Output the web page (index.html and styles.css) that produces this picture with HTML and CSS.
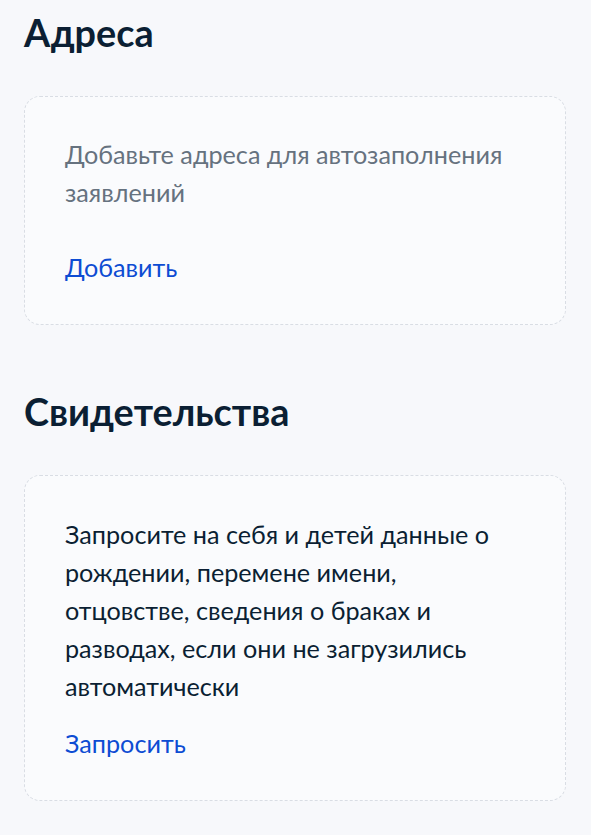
FILE: index.html
```html
<!DOCTYPE html>
<html lang="ru">
<head>
<meta charset="utf-8">
<link rel="stylesheet" href="styles.css">
</head>
<body>
<main class="page">
  <section class="section">
    <h2 class="section-title">Адреса</h2>
    <div class="card card--empty">
      <p class="card-text card-text--muted">Добавьте адреса для автозаполнения заявлений</p>
      <a class="card-link" href="#">Добавить</a>
    </div>
  </section>
  <section class="section">
    <h2 class="section-title">Свидетельства</h2>
    <div class="card">
      <p class="card-text">Запросите на себя и детей данные о рождении, перемене имени, отцовстве, сведения о браках и разводах, если они не загрузились автоматически</p>
      <a class="card-link" href="#">Запросить</a>
    </div>
  </section>
</main>
</body>
</html>
```
FILE: styles.css
```css
html, body {
  margin: 0;
  padding: 0;
  background: #f7f8fb;
}
body {
  font-family: Lato, "Noto Sans", sans-serif;
  color: #0b1f33;
}
.page {
  padding: 11px 25px 0 24px;
  display: flex;
  flex-direction: column;
  gap: 65px;
}
.section {
  display: flex;
  flex-direction: column;
  gap: 41px;
}
.section-title {
  margin: 0;
  font-size: 37.8px;
  line-height: 44px;
  font-weight: 700;
  color: #0b1f33;
}
.card {
  border: 1px dashed #d9dde4;
  border-radius: 16px;
  background: #fafbfd;
  padding: 39px 40px 38px;
  display: flex;
  flex-direction: column;
  align-items: flex-start;
}
.card--empty {
  padding-top: 38px;
}
.card-text {
  margin: 0 0 19px;
  font-size: 25.2px;
  line-height: 38px;
}
.card--empty .card-text {
  margin-bottom: 37px;
}
.card-text--muted {
  color: #66727f;
}
.card-link {
  font-size: 25.2px;
  line-height: 38px;
  color: #0d4cd3;
  text-decoration: none;
}
```
